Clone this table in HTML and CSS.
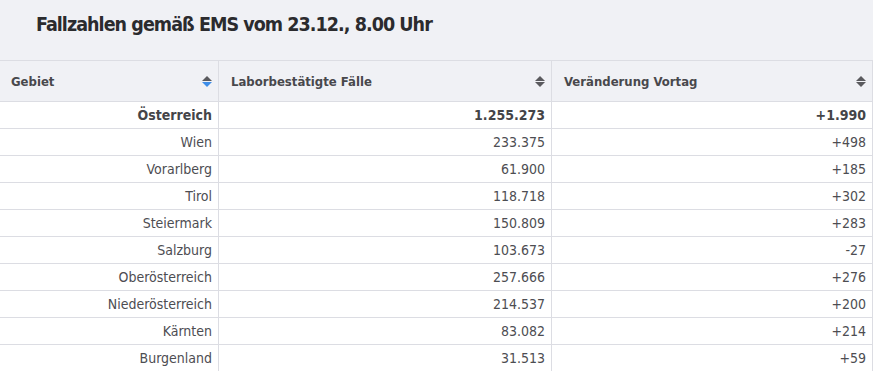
FILE: index.html
```html
<!DOCTYPE html>
<html lang="de">
<head>
<meta charset="utf-8">
<link rel="stylesheet" href="styles.css">
</head>
<body>
<div class="wrap">
  <h1 class="title">Fallzahlen gemäß EMS vom 23.12., 8.00 Uhr</h1>
  <table class="data">
    <thead>
      <tr>
        <th class="c1"><div class="th-in"><span>Gebiet</span><span class="sort active"><i class="up"></i><i class="down"></i></span></div></th>
        <th class="c2"><div class="th-in"><span>Laborbestätigte Fälle</span><span class="sort"><i class="up"></i><i class="down"></i></span></div></th>
        <th class="c3"><div class="th-in"><span>Veränderung Vortag</span><span class="sort"><i class="up"></i><i class="down"></i></span></div></th>
      </tr>
    </thead>
    <tbody>
      <tr class="total"><td>Österreich</td><td>1.255.273</td><td>+1.990</td></tr>
      <tr><td>Wien</td><td>233.375</td><td>+498</td></tr>
      <tr><td>Vorarlberg</td><td>61.900</td><td>+185</td></tr>
      <tr><td>Tirol</td><td>118.718</td><td>+302</td></tr>
      <tr><td>Steiermark</td><td>150.809</td><td>+283</td></tr>
      <tr><td>Salzburg</td><td>103.673</td><td>-27</td></tr>
      <tr><td>Oberösterreich</td><td>257.666</td><td>+276</td></tr>
      <tr><td>Niederösterreich</td><td>214.537</td><td>+200</td></tr>
      <tr><td>Kärnten</td><td>83.082</td><td>+214</td></tr>
      <tr><td>Burgenland</td><td>31.513</td><td>+59</td></tr>
    </tbody>
  </table>
</div>
</body>
</html>
```
FILE: styles.css
```css
html, body {
  margin: 0;
  padding: 0;
  background: #f0f1f5;
}
body {
  font-family: "DejaVu Sans Condensed", "Liberation Sans", sans-serif;
  color: #454548;
}
.wrap {
  width: 873px;
}
.title {
  margin: 0;
  height: 60px;
  box-sizing: border-box;
  padding: 11px 0 0 36px;
  font-size: 19.5px;
  letter-spacing: -0.95px;
  font-weight: 700;
  color: #2b2b2e;
  line-height: 28px;
}
.data {
  width: 873px;
  border-collapse: collapse;
  background: #fff;
  border-top: 1px solid #dcdde3;
}
.data th {
  background: #f0f1f5;
  height: 40px;
  padding: 0;
  text-align: left;
  font-size: 13px;
  font-weight: 700;
  color: #48484c;
  border-right: 1px solid #dcdde3;
  border-bottom: 1px solid #dcdde3;
}
.data th.c1 { width: 218px; }
.data th.c2 { width: 332px; }
.th-in {
  display: flex;
  align-items: center;
  justify-content: space-between;
  padding: 0 6px 0 11px;
}
.data th.c2 .th-in,
.data th.c3 .th-in { padding-left: 12px; }
.sort {
  display: flex;
  flex-direction: column;
  gap: 1px;
  width: 10px;
}
.sort i {
  display: block;
  width: 0;
  height: 0;
  border-left: 5px solid transparent;
  border-right: 5px solid transparent;
}
.sort .up { border-bottom: 5px solid #5a5a5e; }
.sort .down { border-top: 5px solid #5a5a5e; }
.sort.active .down { border-top-color: #3d8de8; }
.data td {
  height: 26px;
  padding: 0 6px 0 6px;
  text-align: right;
  font-size: 14px;
  color: #4d4d52;
  border-right: 1px solid #dcdde3;
  border-bottom: 1px solid #dcdde3;
}
.data tr.total td {
  font-weight: 700;
  color: #444448;
}
```
